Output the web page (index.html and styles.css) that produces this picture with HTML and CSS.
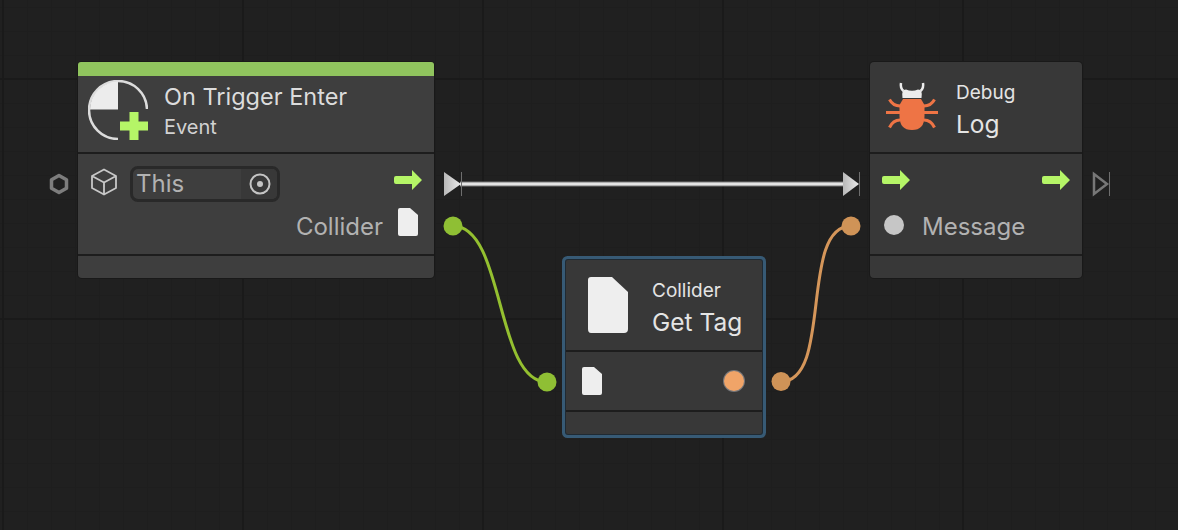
FILE: index.html
```html
<!DOCTYPE html>
<html lang="en">
<head>
<meta charset="utf-8">
<title>Flow graph</title>
<link rel="stylesheet" href="styles.css">
</head>
<body>
<main class="canvas">
  <svg class="wires" width="1178" height="530" viewBox="0 0 1178 530">
    <defs>
      <linearGradient id="tri" x1="0" x2="1" y1="0" y2="0"><stop offset="0" stop-color="#b8b8b8"/><stop offset="1" stop-color="#ececec"/></linearGradient>
    </defs>
    <path class="wire-flow-edge" d="M460 184H845"/>
    <path class="wire-flow" d="M460 184H845"/>
    <path class="wire-green" d="M453 226C505 226 495 382 547 382"/>
    <path class="wire-orange" d="M781 381.500C833 381.500 799 226 851 226"/>
    <polygon class="hex" points="59,175.500 66.500,179.800 66.500,188.200 59,192.500 51.500,188.200 51.500,179.800"/>
    <path class="tri" d="M444 172L461 184L444 196Z"/>
    <rect class="tri-line" x="461" y="172" width="1" height="24"/>
    <path class="tri" d="M843 172L859 184L843 196Z"/>
    <rect class="tri-line" x="859" y="172" width="1" height="24"/>
    <path class="tri-open" d="M1094 174L1107 184L1094 194Z"/>
    <rect class="tri-line" x="1109" y="172" width="1" height="24"/>
    <circle class="port-green" cx="453" cy="226" r="9.500"/>
    <circle class="port-green" cx="547" cy="382" r="9.500"/>
    <circle class="port-orange" cx="781" cy="381.500" r="9.500"/>
    <circle class="port-orange" cx="851" cy="226" r="9.500"/>
  </svg>

  <section class="node node-event">
    <div class="event-bar"></div>
    <header class="node-head head-event">
      <svg class="event-icon" width="60" height="60" viewBox="0 0 60 60">
        <path class="event-arc" d="M59 29A29 29 0 1 0 30 59"/>
        <path class="event-quad" d="M30 29.500V1.500A28 28 0 0 0 2 29.500Z"/>
        <path class="plus" d="M41.500 32h9v9.500H60v9h-9.500V60h-9v-9.500H32v-9h9.500Z"/>
      </svg>
      <div class="titles titles-event">
        <div class="title-main">On Trigger Enter</div>
        <div class="title-sub">Event</div>
      </div>
    </header>
    <div class="node-body body-event">
      <div class="row row-this">
        <svg class="cube" width="28" height="28" viewBox="0 0 28 28">
          <path d="M14 1.500L26 8V20L14 26.500L2 20V8ZM2 8L14 14.500L26 8M14 14.500V26.500"/>
        </svg>
        <div class="field">
          <span class="field-text">This</span>
          <span class="field-pick"><svg width="22" height="22" viewBox="0 0 22 22"><circle class="pick-ring" cx="11" cy="11" r="9.500"/><circle class="pick-dot" cx="11" cy="11" r="3"/></svg></span>
        </div>
        <svg class="arrow arrow-end" width="28" height="20" viewBox="0 0 28 20"><path d="M2 6H18V0L28 10L18 20V14H2Q0 14 0 12V8Q0 6 2 6Z"/></svg>
      </div>
      <div class="row row-out">
        <span class="port-label label-out">Collider</span>
        <svg class="doc" width="20" height="28" viewBox="0 0 20 28"><path d="M2 0H12L20 7V26Q20 28 18 28H2Q0 28 0 26V2Q0 0 2 0Z"/></svg>
      </div>
    </div>
    <footer class="node-foot"></footer>
  </section>

  <section class="node node-tag">
    <header class="node-head head-std">
      <svg class="doc doc-big" width="40" height="56" viewBox="0 0 40 56"><path d="M3 0H24L40 15V52Q40 56 36 56H3Q0 56 0 52V3Q0 0 3 0Z"/></svg>
      <div class="titles titles-std">
        <div class="title-small">Collider</div>
        <div class="title-big">Get Tag</div>
      </div>
    </header>
    <div class="node-body body-tag">
      <svg class="doc" width="20" height="28" viewBox="0 0 20 28"><path d="M2 0H12L20 7V26Q20 28 18 28H2Q0 28 0 26V2Q0 0 2 0Z"/></svg>
      <span class="dot dot-orange"></span>
    </div>
    <footer class="node-foot"></footer>
  </section>

  <section class="node node-log">
    <header class="node-head head-std head-log">
      <svg class="bug" width="52" height="50" viewBox="0 0 52 50">
        <path class="bug-horns" d="M15 1Q14 6 17.500 9M37 1Q38 6 34.500 9"/>
        <path class="bug-head" d="M16.500 16Q15 7.500 20 7.500Q26 10 32 7.500Q37 7.500 35.500 16Z"/>
        <path class="bug-body" d="M17 17H35L38.500 23V34Q38.500 48 26 48Q13.500 48 13.500 34V23Z"/>
        <path class="bug-legs" d="M0 30.500H52M14 24Q7 24 3.500 17.500M38 24Q45 24 48.500 17.500M14 38Q7 38 3.500 45.500M38 38Q45 38 48.500 45.500"/>
      </svg>
      <div class="titles titles-std">
        <div class="title-small">Debug</div>
        <div class="title-big">Log</div>
      </div>
    </header>
    <div class="node-body body-log">
      <div class="row row-flow">
        <svg class="arrow" width="28" height="20" viewBox="0 0 28 20"><path d="M2 6H18V0L28 10L18 20V14H2Q0 14 0 12V8Q0 6 2 6Z"/></svg>
        <svg class="arrow" width="28" height="20" viewBox="0 0 28 20"><path d="M2 6H18V0L28 10L18 20V14H2Q0 14 0 12V8Q0 6 2 6Z"/></svg>
      </div>
      <div class="row row-msg">
        <span class="dot dot-gray"></span>
        <span class="port-label label-msg">Message</span>
      </div>
    </div>
    <footer class="node-foot"></footer>
  </section>
</main>
</body>
</html>
```

FILE: styles.css
```css
* { box-sizing: border-box; }
html, body { margin: 0; padding: 0; background: #202020; }

.canvas {
  position: relative;
  width: 1178px;
  height: 530px;
  overflow: hidden;
  font-family: Inter, "Liberation Sans", sans-serif;
  background-color: #202020;
  background-image:
    linear-gradient(90deg, #1a1a1a 2px, transparent 2px),
    linear-gradient(180deg, #1a1a1a 2px, transparent 2px),
    linear-gradient(90deg, #1e1e1e 1px, transparent 1px),
    linear-gradient(180deg, #1e1e1e 1px, transparent 1px);
  background-size: 240px 240px, 240px 240px, 24px 24px, 24px 24px;
  background-position: 2px 0, 0 78px, 3px 0, 0 7px;
}

.wires { position: absolute; left: 0; top: 0; }
.wires path, .wires circle { fill: none; }
.wire-flow { stroke: #e4e4e4; stroke-width: 3; }
.wire-flow-edge { stroke: #777; stroke-width: 5; }
.wire-green { stroke: #94c030; stroke-width: 3; }
.wires .wire-orange { stroke: #d5965a; stroke-width: 3; }
.hex { fill: none; stroke: #7d7d7d; stroke-width: 3.500; stroke-linejoin: round; filter: blur(0.6px); }
.wires .tri { fill: url(#tri); filter: blur(0.4px); }
.tri-line { fill: #6e6e6e; }
.wires .tri-open { fill: none; stroke: #777; stroke-width: 2.500; }
.wires .port-green { fill: #8fbf34; filter: blur(0.5px); }
.wires .port-orange { fill: #cf9357; filter: blur(0.5px); }

.node {
  position: absolute;
  display: flex;
  flex-direction: column;
  background: #383838;
  border-radius: 4px;
  box-shadow: 0 0 0 1px #191919;
}
.node-event { left: 78px; top: 62px; width: 356px; height: 216px; background: #3e3e3e; }
.node-log { left: 870px; top: 62px; width: 212px; height: 216px; }
.node-tag {
  left: 566px;
  top: 260px;
  width: 196px;
  height: 174px;
  border-radius: 2px;
  box-shadow: 0 0 0 1px #1f2a33, 0 0 0 4px #375a75;
}

.event-bar { height: 14px; background: #90c45e; border-radius: 3px 3px 0 0; }

.node-head {
  display: flex;
  align-items: center;
  border-bottom: 2px solid #1d1d1d;
}
.head-event { height: 78px; padding-left: 10px; gap: 16px; }
.head-std { height: 92px; }
.node-tag .node-head { padding-left: 22px; gap: 24px; }
.head-log { padding-left: 16px; gap: 18px; }

.titles { display: flex; flex-direction: column; color: #e4e4e4; }
.titles-event { margin-top: -5px; }
.titles-std { margin-top: 9px; }
.title-main { font-size: 23.500px; line-height: 32px; color: #dcdcdc; }
.title-sub { font-size: 20px; line-height: 29px; color: #d2d2d2; }
.title-small { font-size: 19px; line-height: 26px; }
.title-big { font-size: 24.500px; line-height: 37px; }

.event-icon { filter: blur(0.3px); margin-top: -8px; }
.event-arc { fill: none; stroke: #dcdcdc; stroke-width: 2.500; }
.event-quad { fill: #ececec; }
.plus { fill: #b5f567; }

.node-body { display: flex; flex-direction: column; }
.body-event { height: 102px; border-bottom: 2px solid #1d1d1d; padding: 12px 12px 0 12px; }
.body-log { height: 102px; border-bottom: 2px solid #1d1d1d; padding: 16px 12px 0 12px; }
.body-tag {
  height: 60px;
  border-bottom: 2px solid #1d1d1d;
  flex-direction: row;
  align-items: center;
  justify-content: space-between;
  padding: 0 18px 0 16px;
}
.node-foot { flex: 1; }

.row { display: flex; align-items: center; }
.row-this { height: 36px; }
.row-out { justify-content: flex-end; height: 28px; margin-top: 6px; gap: 15px; padding-right: 4px; }
.row-flow { justify-content: space-between; height: 20px; }
.row-msg { gap: 18px; height: 28px; margin-top: 21px; padding-left: 2px; }

.cube { margin-right: 12px; margin-top: -4px; }
.cube path { fill: none; stroke: #c8c8c8; stroke-width: 1.800; stroke-linejoin: round; }

.field {
  display: flex;
  align-items: center;
  width: 150px;
  height: 36px;
  border: 3px solid #292929;
  border-radius: 8px;
  background: #3e3e3e;
  overflow: hidden;
}
.field-text { flex: 1; padding-left: 3px; font-size: 24px; line-height: 30px; color: #b2b2b2; }
.field-pick {
  display: flex;
  align-items: center;
  justify-content: center;
  width: 36px;
  height: 30px;
  padding-left: 2px;
  background: #383838;
}
.pick-ring { fill: none; stroke: #c4c4c4; stroke-width: 2; }
.pick-dot { fill: #c4c4c4; }

.arrow path { fill: #b5f567; }
.arrow-end { margin-left: auto; margin-top: -8px; }

.port-label { font-size: 24px; line-height: 28px; color: #b2b2b2; }
.label-out { margin-top: 10px; }
.label-msg { margin-top: 4px; }
.doc path { fill: #eeeeee; }
.dot { display: block; width: 20px; height: 20px; border-radius: 50%; }
.dot-orange { background: #f0a468; box-shadow: 0 0 0 1px #77777a; }
.dot-gray { background: #c6c6c6; }

.bug-horns { fill: none; stroke: #ececec; stroke-width: 2.500; }
.bug-head { fill: #ececec; }
.bug-body { fill: #ee7445; }
.bug-legs { fill: none; stroke: #ee7445; stroke-width: 3; }
```
